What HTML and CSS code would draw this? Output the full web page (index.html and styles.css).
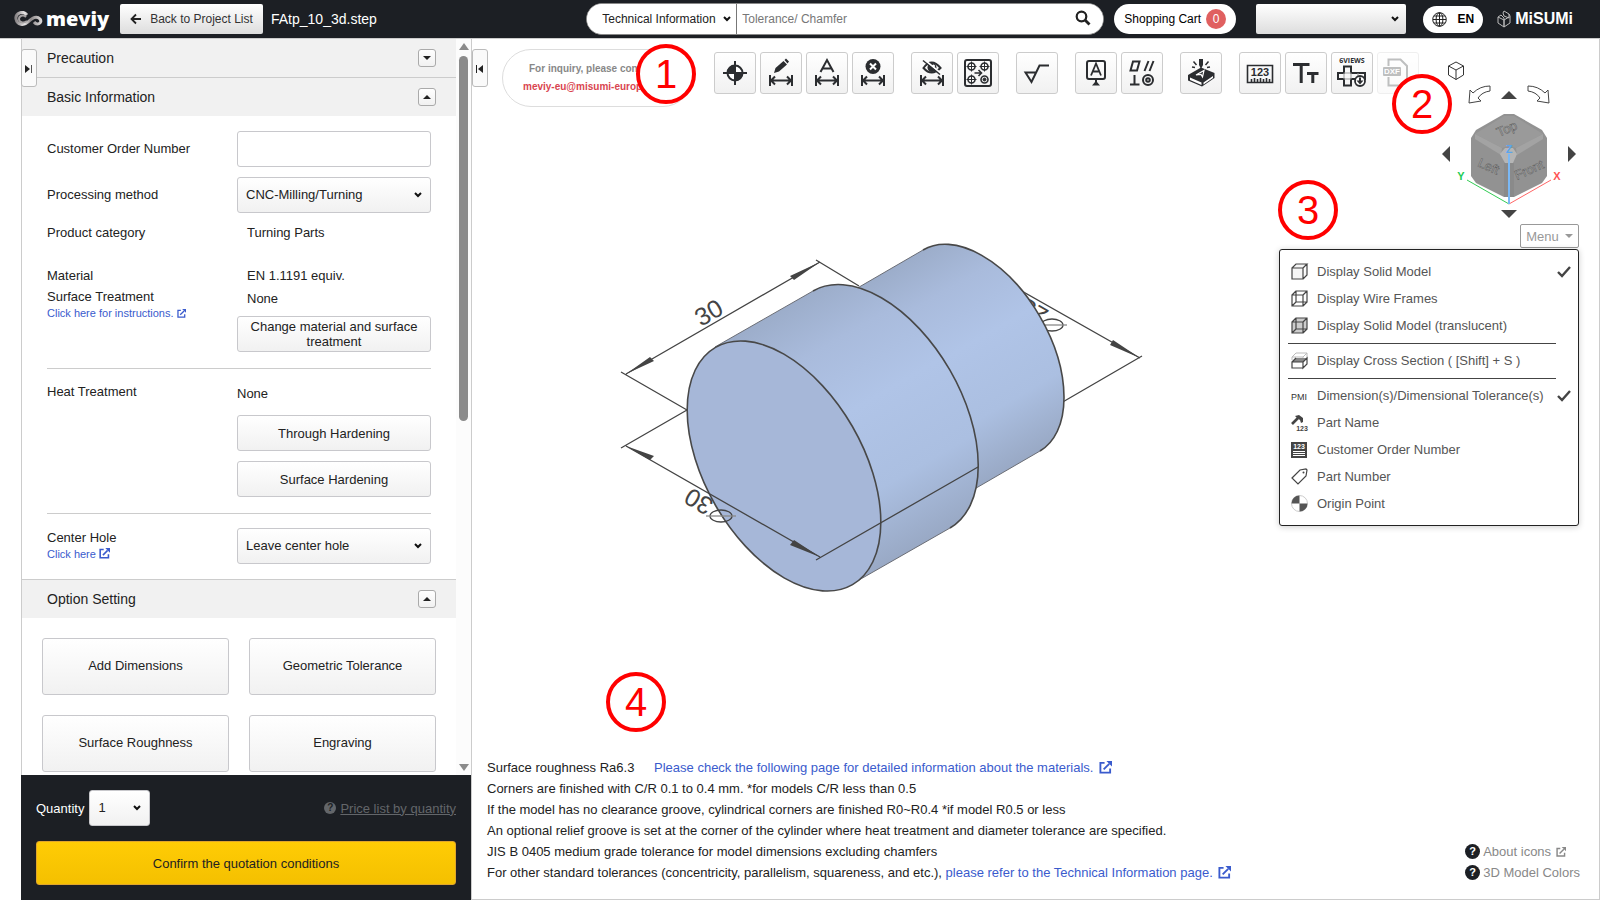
FILE: index.html
```html
<!DOCTYPE html>
<html lang="en">
<head>
    <meta charset="UTF-8">
    <meta name="viewport" content="width=device-width, initial-scale=1.0">
    <title>meviy - FAtp_10_3d.step</title>
    <link rel="stylesheet" href="styles.css">
</head>
<body>
    <!-- shared icons -->
    <svg class="defs" aria-hidden="true">
        <symbol id="ext" viewBox="0 0 14 14">
            <path d="M6 2H1.500v10.500H12V8" fill="none" stroke="currentColor" stroke-width="2"/>
            <path d="M5 9l6-6" stroke="currentColor" stroke-width="2"/>
            <path d="M8 0h6v6z" fill="currentColor"/>
        </symbol>
        <symbol id="span" viewBox="0 0 40 40">
            <path d="M9 22v11M31 22v11M10 27.500h20M14 23.500l-4 4 4 4M26 23.500l4 4-4 4" fill="none" stroke="#2b2d30" stroke-width="2"/>
        </symbol>
        <symbol id="check" viewBox="0 0 14 12">
            <path d="M1 6l4 4 8-9" fill="none" stroke="#444" stroke-width="2.400"/>
        </symbol>
    </svg>

    <header class="topbar">
        <a class="logo" href="#" aria-label="meviy">
            <svg width="30" height="16" viewBox="0 0 30 16">
                <defs>
                    <linearGradient id="ribbon" x1="0" x2="1">
                        <stop offset="0" stop-color="#8a8688"/>
                        <stop offset=".35" stop-color="#e8e6e6"/>
                        <stop offset=".6" stop-color="#8c8788"/>
                        <stop offset="1" stop-color="#d6d3d3"/>
                    </linearGradient>
                </defs>
                <path d="M13 4C9-1 1 2 2 8s8 7 12 3 8-7 12-3c3 4-3 7-6 3" fill="none" stroke="url(#ribbon)" stroke-width="3"/>
                <path d="M12 6C9 3 5 5 5 8s4 5 8 2" fill="none" stroke="#a5a1a2" stroke-width="2"/>
            </svg>
            <span>meviy</span>
        </a>
        <button class="back">
            <svg width="12" height="12" viewBox="0 0 12 12"><path d="M11 6H2M6 1.500L1.500 6 6 10.500" fill="none" stroke="#222" stroke-width="1.800"/></svg>
            Back to Project List
        </button>
        <span class="filename">FAtp_10_3d.step</span>
        <form class="search">
            <select aria-label="Search category"><option>Technical Information</option></select>
            <input type="text" placeholder="Tolerance/ Chamfer" aria-label="Search">
            <button type="button" aria-label="Search">
                <svg width="16" height="16" viewBox="0 0 16 16"><circle cx="6.500" cy="6.500" r="4.800" fill="none" stroke="#222" stroke-width="2.200"/><path d="M10 10l4.500 4.500" stroke="#222" stroke-width="2.800"/></svg>
            </button>
        </form>
        <button class="cart">Shopping Cart <span class="count">0</span></button>
        <select class="account" aria-label="Account"><option></option></select>
        <button class="lang">
            <svg width="15" height="15" viewBox="0 0 15 15" fill="none" stroke="#222">
                <circle cx="7.500" cy="7.500" r="6.800"/><ellipse cx="7.500" cy="7.500" rx="3.400" ry="6.800"/><path d="M7.500 1v13M1 7.500h13M2 4h11M2 11h11"/>
            </svg>
            EN
        </button>
        <a class="misumi" href="#" aria-label="MiSUMi">
            <svg width="14" height="18" viewBox="0 0 14 18" fill="none" stroke="#bbb">
                <path d="M7 1l5 3v4L7 6 6 3zM12 4l1 2v7l-6 4-6-4V7l3-2 3 3v9M1 7l6 3 5-3M7 10v7"/>
            </svg>
            <span>MiSUMi</span>
        </a>
    </header>

    <div class="page">
        <aside class="sidebar">
            <div class="panel">
                <div class="panel-body">
                    <section>
                        <h2 class="head">Precaution <button class="toggle" aria-label="Open precaution"><i class="down"></i></button></h2>
                    </section>
                    <section>
                        <h2 class="head">Basic Information <button class="toggle" aria-label="Close basic information"><i class="up"></i></button></h2>
                        <div class="basic">
                            <div class="row">
                                <label for="orderNumber">Customer Order Number</label>
                                <input type="text" id="orderNumber">
                            </div>
                            <div class="row">
                                <label for="method">Processing method</label>
                                <select id="method"><option>CNC-Milling/Turning</option></select>
                            </div>
                            <div class="row">
                                <span class="name">Product category</span>
                                <span class="value">Turning Parts</span>
                            </div>
                            <div class="row material">
                                <div class="name">
                                    <p>Material</p>
                                    <p>Surface Treatment</p>
                                    <a href="#">Click here for instructions. <svg width="9" height="9"><use href="#ext"/></svg></a>
                                </div>
                                <div class="field">
                                    <p class="value">EN 1.1191 equiv.</p>
                                    <p class="value surface">None</p>
                                    <button class="btn">Change material and surface treatment</button>
                                </div>
                            </div>
                            <hr>
                            <div class="row heat">
                                <p class="name">Heat Treatment</p>
                                <div class="field">
                                    <p>None</p>
                                    <button class="btn">Through Hardening</button>
                                    <button class="btn">Surface Hardening</button>
                                </div>
                            </div>
                            <hr>
                            <div class="row hole">
                                <div class="name">
                                    <label for="hole">Center Hole</label>
                                    <a href="#">Click here <svg width="11" height="11"><use href="#ext"/></svg></a>
                                </div>
                                <select id="hole"><option>Leave center hole</option></select>
                            </div>
                        </div>
                    </section>
                    <section>
                        <h2 class="head">Option Setting <button class="toggle" aria-label="Close option setting"><i class="up"></i></button></h2>
                        <div class="options">
                            <button class="btn">Add Dimensions</button>
                            <button class="btn">Geometric Tolerance</button>
                            <button class="btn">Surface Roughness</button>
                            <button class="btn">Engraving</button>
                        </div>
                    </section>
                </div>
                <div class="scrollbar">
                    <i class="up"></i>
                    <div class="track"><div class="thumb"></div></div>
                    <i class="down"></i>
                </div>
                <button class="tab" aria-label="Expand panel"><svg width="8" height="8"><path d="M0 0l5 4-5 4z" fill="#222"/><path d="M6.500 0v8" stroke="#555"/></svg></button>
            </div>
            <div class="order">
                <div class="order-row">
                    <label for="quantity">Quantity</label>
                    <select id="quantity"><option>1</option></select>
                    <a href="#"><span class="help">?</span><u>Price list by quantity</u></a>
                </div>
                <button class="confirm">Confirm the quotation conditions</button>
            </div>
        </aside>

        <main class="viewer">
            <button class="tab" aria-label="Collapse panel"><svg width="8" height="8"><path d="M7 0L2 4l5 4z" fill="#222"/><path d="M.5 0v8" stroke="#222"/></svg></button>
            <div class="toolbar">
                <div class="inquiry">
                    <p>For inquiry, please con</p>
                    <a href="#">meviy-eu@misumi-europ</a>
                </div>
                <div class="group">
                    <button aria-label="Origin"><svg viewBox="0 0 40 40"><circle cx="20" cy="20" r="7.500" fill="#fff" stroke="#2b2d30" stroke-width="2"/><path d="M20 20v-8a8 8 0 0 0-8 8zM20 20v8a8 8 0 0 0 8-8z" fill="#2b2d30"/><path d="M8 20h24M20 8v24" stroke="#2b2d30" stroke-width="2"/></svg></button>
                    <button aria-label="Edit dimension"><svg viewBox="0 0 40 40"><path d="M13 20l1.500-5 8-7 3.500 3.500-8 7zM23.500 7l1.500-1.500 3 3-1.500 2z" fill="#2b2d30"/><use href="#span"/></svg></button>
                    <button aria-label="Text dimension"><svg viewBox="0 0 40 40"><path d="M13.500 19L20 7l6.500 12M16 15.500h8" fill="none" stroke="#2b2d30" stroke-width="2"/><use href="#span"/></svg></button>
                    <button aria-label="Delete dimension"><svg viewBox="0 0 40 40"><circle cx="20" cy="13.500" r="7.500" fill="#2b2d30"/><path d="M17 10.500l6 6M23 10.500l-6 6" stroke="#fff" stroke-width="2"/><use href="#span"/></svg></button>
                </div>
                <div class="group">
                    <button aria-label="Hide dimension"><svg viewBox="0 0 40 40"><path d="M11.500 15q8-11 17 0-9 9-17 0z" fill="none" stroke="#2b2d30" stroke-width="2"/><circle cx="20" cy="14.500" r="4.500" fill="#2b2d30"/><circle cx="21.500" cy="13" r="1.500" fill="#fff"/><path d="M12 6.500l17 14" stroke="#fff" stroke-width="2"/><path d="M11 7.500l17 14" stroke="#2b2d30" stroke-width="1.500"/><use href="#span"/></svg></button>
                    <button aria-label="Hole pattern"><svg viewBox="0 0 40 40" fill="none" stroke="#2b2d30"><rect x="7" y="7" width="26" height="26" rx="2" stroke-width="2"/><g stroke-width="1.600"><circle cx="13.500" cy="13.500" r="3.500"/><circle cx="26.500" cy="13.500" r="3.500"/><circle cx="13.500" cy="26.500" r="3.500"/><circle cx="26.500" cy="26.500" r="3.500"/></g><path d="M8.500 13.500h10M13.500 8.500v10M21.500 13.500h10M26.500 8.500v10M8.500 26.500h10M13.500 21.500v10" stroke-width="1"/><circle cx="26.500" cy="26.500" r="1.500" fill="#2b2d30"/><path d="M16.500 20h7M20.500 17l3 3-3 3" stroke-width="1.600"/></svg></button>
                </div>
                <div class="group">
                    <button aria-label="Surface roughness"><svg viewBox="0 0 40 40"><path d="M18.500 19.500H8.500l6 9.500 8-16.500H32" fill="none" stroke="#2b2d30" stroke-width="2"/></svg></button>
                </div>
                <div class="group">
                    <button aria-label="Datum"><svg viewBox="0 0 40 40"><rect x="11" y="8" width="18" height="18" rx="2" fill="none" stroke="#2b2d30" stroke-width="2"/><path d="M15 22.500l5-12 5 12M17 18.500h6" fill="none" stroke="#2b2d30" stroke-width="1.800"/><path d="M19 26h2v3l3 3.500h-8l3-3.500z" fill="#2b2d30"/></svg></button>
                    <button aria-label="Geometric tolerance"><svg viewBox="0 0 40 40" fill="none" stroke="#2b2d30" stroke-width="2"><path d="M8.500 17.500l2.500-9h6.500l-2.500 9zM22.500 18l4-10M27.500 18l4-10M12.500 22v9M8 31.500h9.500"/><circle cx="26" cy="27" r="5"/><circle cx="26" cy="27" r="1.800"/></svg></button>
                </div>
                <div class="group">
                    <button aria-label="Engraving"><svg viewBox="0 0 40 40"><path d="M7 22l13-7.500L33.500 20v5L21 33.500 7 27.500z" fill="#2b2d30"/><path d="M9 24.500l11.500 5V32L9 27zM22.500 29.500l9.500-6.500v2l-9.500 6.500z" fill="#fff"/><path d="M15 22l8-4.500-1.500 6.500-1.500-2.500z" fill="none" stroke="#fff" stroke-width="1.200"/><path d="M18 6h4v6l-2 4-2-4z" fill="#2b2d30"/><path d="M12.500 8.500l3 3.500M27.500 8.500l-3 3.500M11 14l3 .5M29 14l-3 .5" stroke="#2b2d30" stroke-width="1.500"/></svg></button>
                </div>
                <div class="group">
                    <button aria-label="Measure"><svg viewBox="0 0 40 40"><path d="M7.500 12.500h25v17h-25zM11.500 29v-3M14.500 29v-4M17.500 29v-3M20.500 29v-4M23.500 29v-3M26.500 29v-4M29.500 29v-3" fill="none" stroke="#2b2d30" stroke-width="1.600"/><text x="20" y="23" class="ruler">123</text></svg></button>
                    <button aria-label="Text size"><svg viewBox="0 0 40 40"><path d="M7 11.500h16.500M15.200 11v19M21 20.500h11.500M26.800 20v10" stroke="#2b2d30" stroke-width="3" fill="none"/></svg></button>
                    <button aria-label="Six views"><svg viewBox="0 0 40 40"><text x="20" y="10" class="views">6VIEWS</text><path d="M12 13.500h7v6.500h14v6H19v6.500h-7V26H6v-6h6z" fill="none" stroke="#2b2d30" stroke-width="2"/><path d="M12 20h7v6h-7zM26 20v6" fill="none" stroke="#999"/><circle cx="28" cy="28" r="5" fill="#fff" stroke="#2b2d30" stroke-width="1.800"/><path d="M27 24.500h2v3h2.500L28 31.500l-3.500-4H27z" fill="#2b2d30"/></svg></button>
                    <button aria-label="DXF" disabled><svg viewBox="0 0 40 40"><path d="M10.500 13V6.500h12l6.500 6.500v19.500H10.500V24" fill="none" stroke="#2b2d30" stroke-width="2"/><rect x="5" y="14" width="18" height="9" rx="1" fill="#2b2d30"/><text x="14" y="21" class="dxf">DXF</text></svg></button>
                </div>
            </div>

            <div class="stage">
                <svg class="model" width="536" height="362" viewBox="612 238 536 362">
                    <defs>
                        <linearGradient id="body" gradientUnits="userSpaceOnUse" x1="716" y1="347" x2="853" y2="584">
                            <stop offset="0" stop-color="#9cadca"/>
                            <stop offset=".2" stop-color="#a9bbdc"/>
                            <stop offset=".45" stop-color="#b0c4e7"/>
                            <stop offset=".75" stop-color="#abbfe1"/>
                            <stop offset="1" stop-color="#99a9c5"/>
                        </linearGradient>
                        <linearGradient id="shaft" gradientUnits="userSpaceOnUse" x1="924" y1="250" x2="1041" y2="451">
                            <stop offset="0" stop-color="#9cadca"/>
                            <stop offset=".2" stop-color="#a9bbdc"/>
                            <stop offset=".45" stop-color="#b0c4e7"/>
                            <stop offset=".75" stop-color="#abbfe1"/>
                            <stop offset="1" stop-color="#99a9c5"/>
                        </linearGradient>
                    </defs>
                    <!-- shaft diameter, partly behind the part -->
                    <g class="dim">
                        <path d="M1014 286L1141 358M1143 356L1062 403"/>
                        <path class="arrow" d="M1141 358l-30-13 3-5z"/>
                        <text transform="translate(1051 311) rotate(210)">25</text>
                        <ellipse cx="1053" cy="325" rx="11" ry="6"/>
                        <path class="thin" d="M1038 325h30"/>
                    </g>
                    <path d="M824 308L924 250A110 64 60 0 1 1041 451L941 509z" fill="url(#shaft)"/>
                    <path class="side" d="M824 308L924 250M1041 451L941 509"/>
                    <path class="edge" d="M924 250A110 64 60 0 1 1041 451"/>
                    <path d="M716 347L814 291A130 75 60 0 1 951 528L853 584z" fill="url(#body)"/>
                    <path class="side" d="M716 347L814 291M951 528L853 584"/>
                    <path class="edge" d="M814 291A130 75 60 0 1 951 528"/>
                    <ellipse class="edge" cx="785" cy="466" rx="137" ry="79" transform="rotate(60 785 466)" fill="#a6b7d8"/>
                    <g class="dim">
                        <path d="M627 374L821 262M622 372L688 410M817 260L860 286"/>
                        <path class="arrow" d="M627 374l24-17 4 4zM821 262l-30 14 4 4z"/>
                        <text transform="translate(702 327) rotate(-30)">30</text>
                        <path d="M627 446L821 557M622 448L688 410M817 560L979 467"/>
                        <path class="arrow" d="M627 446l24 14 4-4zM821 557l-30-12 4-5z"/>
                        <text transform="translate(716 501) rotate(210)">30</text>
                        <ellipse cx="722" cy="516" rx="11" ry="6"/>
                        <path class="thin" d="M707 516h30"/>
                    </g>
                </svg>
            </div>

            <div class="notes">
                <div>
                    <p>Surface roughness Ra6.3 <a class="check-link" href="#">Please check the following page for detailed information about the materials. <svg width="13" height="13"><use href="#ext"/></svg></a></p>
                    <p>Corners are finished with C/R 0.1 to 0.4 mm. *for models C/R less than 0.5</p>
                    <p>If the model has no clearance groove, cylindrical corners are finished R0~R0.4 *if model R0.5 or less</p>
                    <p>An optional relief groove is set at the corner of the cylinder where heat treatment and diameter tolerance are specified.</p>
                    <p>JIS B 0405 medium grade tolerance for model dimensions excluding chamfers</p>
                    <p>For other standard tolerances (concentricity, parallelism, squareness, and etc.), <a href="#">please refer to the Technical Information page. <svg width="13" height="13"><use href="#ext"/></svg></a></p>
                </div>
                <div class="guides">
                    <a href="#"><span class="help">?</span>About icons <svg width="10" height="10"><use href="#ext"/></svg></a>
                    <a href="#"><span class="help">?</span>3D Model Colors</a>
                </div>
            </div>

            <div class="view-tools">
                <div class="navcube">
                    <button class="home" aria-label="Isometric view"><svg width="18" height="20" viewBox="0 0 18 20" fill="none" stroke="#333"><path d="M9 1l7.500 4v9L9 18.500 1.500 14V5zM1.500 5L9 9l7.500-4M9 9v9.500"/></svg></button>
                    <div class="turn">
                        <button aria-label="Rotate left"><svg width="23" height="19" viewBox="0 0 23 19"><path d="M22 1v5Q14 7 10 13l3 3-12 2L2 5l3 3Q12 1 22 1z" fill="#fff" stroke="#444"/></svg></button>
                        <button aria-label="Up"><i class="up"></i></button>
                        <button aria-label="Rotate right"><svg width="23" height="19" viewBox="0 0 23 19"><path d="M1 1v5q8 1 12 7l-3 3 12 2-1-13-3 3Q11 1 1 1z" fill="#fff" stroke="#444"/></svg></button>
                    </div>
                    <div class="cube-row">
                        <button aria-label="Left"><i class="left"></i></button>
                        <svg width="108" height="92" viewBox="1455 114 108 92">
                            <path d="M1504 114h10l28 16 5 8v38l-5 7-28 14h-10l-28-14-5-7v-38l5-8z" fill="#929292"/>
                            <path d="M1475 134l29-18h10l29 18-27 14-7-2-7 2z" fill="#9a9a9a"/>
                            <path d="M1475 134l27 14-1 7-26-16zM1543 134l-27 14 1 7 26-16z" fill="#a3a3a3"/>
                            <path d="M1504 163h10v34h-10z" fill="#8a8a8a"/>
                            <path d="M1505 148h8l4 6-4 9h-8l-5-9z" fill="#b5b5b5"/>
                            <text class="face" transform="translate(1499 137) rotate(-24)">Top</text>
                            <text class="face" transform="translate(1477 166) rotate(24)">Left</text>
                            <text class="face" transform="translate(1517 180) rotate(-24)">Front</text>
                            <path d="M1509 204l-42-24" stroke="#3c5"/>
                            <path d="M1509 204l42-24" stroke="#f66"/>
                            <path d="M1509 204v-50" stroke="#7ab8f5" stroke-width="2"/>
                            <text class="axis" x="1509" y="153" fill="#5aa5ee">Z</text>
                            <text class="axis" x="1461" y="180" fill="#2c5">Y</text>
                            <text class="axis" x="1557" y="180" fill="#f55">X</text>
                        </svg>
                        <button aria-label="Right"><i class="right"></i></button>
                    </div>
                    <button class="below" aria-label="Down"><i class="down"></i></button>
                </div>
                <button class="menu-button">Menu <i class="down"></i></button>
                <ul class="menu">
                    <li><a href="#"><svg viewBox="0 0 17 17"><path d="M1 5h11v11H1zM1 5l4-4h11l-4 4M16 1v11l-4 4" fill="#f6f6f6" stroke="#444" stroke-width="1.200"/></svg>Display Solid Model</a><svg class="tick"><use href="#check"/></svg></li>
                    <li><a href="#"><svg viewBox="0 0 17 17"><path d="M1 5h11v11H1zM5 1h11v11H5zM1 5l4-4M12 5l4-4M12 16l4-4M1 16l4-4" fill="none" stroke="#444" stroke-width="1.200"/></svg>Display Wire Frames</a></li>
                    <li><a href="#"><svg viewBox="0 0 17 17"><path d="M1 5l4-4h11v11l-4 4H1z" fill="#ccc"/><path d="M1 5h11v11H1zM5 1h11v11H5zM1 5l4-4M12 5l4-4M12 16l4-4M1 16l4-4" fill="none" stroke="#444" stroke-width="1.200"/></svg>Display Solid Model (translucent)</a></li>
                    <li class="divider"></li>
                    <li><a href="#"><svg viewBox="0 0 17 17"><path d="M1 8V5l4-4h11v6M1 5h11l4-4M12 5v3" fill="none" stroke="#bbb"/><path d="M1 10l4-4h11l-4 4z" fill="#888"/><path d="M1 10h11v6H1zM16 6v6l-4 4v-6zM1 10l4-4" fill="none" stroke="#444" stroke-width="1.200"/></svg>Display Cross Section ( [Shift] + S )</a></li>
                    <li class="divider"></li>
                    <li><a href="#"><svg viewBox="0 0 17 17"><text x="8" y="13" class="pmi">PMI</text></svg>Dimension(s)/Dimensional Tolerance(s)</a><svg class="tick"><use href="#check"/></svg></li>
                    <li><a href="#"><svg viewBox="0 0 17 17"><path d="M1 10l6-6" stroke="#444" stroke-width="2.600"/><path d="M4 2l4-1 4 3v4l-2 1-1-3-3-2z" fill="#444"/><text x="11" y="17" class="nums">123</text></svg>Part Name</a></li>
                    <li><a href="#"><svg viewBox="0 0 17 17"><path d="M0 1h16v16H0z" fill="#444"/><path d="M2 10.500h12M2 12.500h12M2 14.500h12" stroke="#fff"/><text x="8" y="8" class="nums white">123</text></svg>Customer Order Number</a></li>
                    <li><a href="#"><svg viewBox="0 0 17 17"><path d="M1 10l8-8 6-1 1 1-1 6-8 8z" fill="none" stroke="#444" stroke-width="1.200"/><circle cx="12.500" cy="4.500" r="1" fill="#444"/></svg>Part Number</a></li>
                    <li><a href="#"><svg viewBox="0 0 17 17"><circle cx="8.500" cy="8.500" r="8" fill="#fff" stroke="#ccc"/><path d="M8.500 8.500v-8a8 8 0 0 0-8 8zM8.500 8.500v8a8 8 0 0 0 8-8z" fill="#555"/></svg>Origin Point</a></li>
                </ul>
            </div>

            <!-- callouts laid over the canvas -->
            <span class="callout one">1</span>
            <span class="callout two">2</span>
            <span class="callout three">3</span>
            <span class="callout four">4</span>
        </main>
    </div>
</body>
</html>
```

FILE: styles.css
```css
* {
    box-sizing: border-box;
}
body {
    margin: 0;
    height: 100vh;
    display: flex;
    flex-direction: column;
    font-family: "Liberation Sans", Arial, sans-serif;
    font-size: 13px;
    color: #222;
    background: #fff;
}
p, h2, ul {
    margin: 0;
    padding: 0;
}
button, input, select {
    font: inherit;
    color: inherit;
}
button {
    padding: 0;
    cursor: pointer;
}
select {
    appearance: none;
    --arrow: url("data:image/svg+xml,%3Csvg xmlns='http://www.w3.org/2000/svg' width='8' height='6'%3E%3Cpath d='M1 1l3 3 3-3' fill='none' stroke='%23111' stroke-width='2'/%3E%3C/svg%3E") no-repeat;
}
a {
    color: #3a5bcd;
    text-decoration: none;
}
.defs {
    position: absolute;
    width: 0;
    height: 0;
}

/* small triangles */
i {
    display: block;
    width: 0;
    height: 0;
    border: 4px solid transparent;
}
i.up {
    border-top: 0;
    border-bottom-color: #222;
}
i.down {
    border-bottom: 0;
    border-top-color: #222;
}

/* header */
.topbar {
    display: flex;
    align-items: center;
    flex: none;
    height: 39px;
    padding: 0 27px 0 14px;
    background: #1c1f24;
    border-bottom: 1px solid #ccc;
    color: #fff;
    font-size: 12px;
}
.logo {
    display: flex;
    align-items: center;
    width: 106px;
    gap: 2px;
    color: #fff;
    font: 800 20px/24px "Open Sans", sans-serif;
}
.back {
    display: flex;
    align-items: center;
    justify-content: center;
    gap: 8px;
    width: 143px;
    height: 30px;
    border: 0;
    border-radius: 2px;
    background: linear-gradient(#fff, #ddd);
    color: #333;
}
.filename {
    flex: 1;
    margin-left: 8px;
    font-size: 14px;
}
.search {
    display: flex;
    width: 518px;
    height: 32px;
    border: 1px solid #888;
    border-radius: 16px;
    background: #fff;
    overflow: hidden;
    color: #222;
}
.search select {
    width: 150px;
    padding: 0 15px;
    border: 0;
    border-right: 1px solid #777;
    background: var(--arrow) right 5px center, #fff;
}
.search input {
    flex: 1;
    min-width: 0;
    padding: 0 5px;
    border: 0;
}
.search input::placeholder {
    color: #777;
}
.search button {
    width: 40px;
    border: 0;
    background: #fff;
}
.cart {
    display: flex;
    align-items: center;
    justify-content: center;
    gap: 5px;
    width: 122px;
    height: 30px;
    margin-left: 10px;
    border: 0;
    border-radius: 15px;
    background: #fff;
    color: #000;
}
.count {
    width: 20px;
    line-height: 20px;
    border-radius: 10px;
    background: #e06060;
    color: #fff;
}
.account {
    width: 150px;
    height: 30px;
    margin-left: 20px;
    border: 0;
    border-radius: 2px;
    background: var(--arrow) right 7px center, linear-gradient(#fff, #ddd);
    color: #000;
}
.lang {
    display: flex;
    align-items: center;
    justify-content: center;
    gap: 10px;
    width: 60px;
    height: 27px;
    margin-left: 17px;
    border: 0;
    border-radius: 14px;
    background: #fff;
    color: #000;
    font-weight: bold;
}
.misumi {
    display: flex;
    align-items: center;
    gap: 4px;
    margin-left: 14px;
    color: #fff;
    font: bold 16px/20px "Liberation Sans", sans-serif;
}

.page {
    flex: 1;
    min-height: 0;
    display: flex;
    padding-left: 21px;
}

/* sidebar */
.sidebar {
    display: flex;
    flex-direction: column;
    width: 450px;
    flex: none;
}
.panel {
    position: relative;
    flex: 1;
    min-height: 0;
    display: flex;
    border-left: 1px solid #ccc;
}
.panel-body {
    flex: 1;
    overflow: hidden;
}
.head {
    display: flex;
    align-items: center;
    justify-content: space-between;
    height: 38px;
    padding: 0 20px 0 25px;
    background: #f1f1f1;
    font-size: 14px;
    font-weight: normal;
}
section + section .head {
    height: 39px;
    border-top: 1px solid #ccc;
}
.toggle {
    display: flex;
    align-items: center;
    justify-content: center;
    width: 18px;
    height: 18px;
    border: 1px solid #aaa;
    border-radius: 3px;
    background: linear-gradient(#fff, #f1f1f1);
}
.basic {
    display: flex;
    flex-direction: column;
    gap: 10px;
    padding: 15px 25px;
}
.row {
    display: flex;
    align-items: center;
}
.row > label, .name {
    width: 190px;
}
.row > input, .row > select, .field {
    flex: 1;
    min-width: 0;
}
.row > input, .row > select {
    height: 36px;
    border: 1px solid #c8c8cc;
    border-radius: 3px;
}
.row > select, .order select {
    padding: 0 8px 2px;
    background: var(--arrow) right 8px center, linear-gradient(#fff, #f1f1f1);
}
.row > label {
    padding-bottom: 2px;
}
.row > .value {
    line-height: 19px;
}
.value {
    padding-left: 10px;
}
.btn {
    width: 100%;
    height: 36px;
    border: 1px solid #c8c8cc;
    border-radius: 3px;
    background: linear-gradient(#fff, #f1f1f1);
    line-height: 15px;
}
.basic hr {
    width: 100%;
    height: 1px;
    margin: 6px 0 4px;
    border: 0;
    background: #ccc;
}
.row a {
    display: block;
    font-size: 11px;
    line-height: 12px;
}
.row a svg {
    vertical-align: -1px;
}
.material, .heat, .hole {
    align-items: flex-start;
}
.material {
    margin-top: 13px;
}
.material p {
    line-height: 21px;
}
.material .surface {
    line-height: 25px;
}
.material .field .btn {
    margin-top: 5px;
}
.heat {
    line-height: 18px;
}
.heat .field {
    display: flex;
    flex-direction: column;
    gap: 10px;
}
.heat .field p {
    line-height: 22px;
}
.hole label {
    display: block;
    line-height: 20px;
}
.options {
    display: grid;
    grid-template-columns: 1fr 1fr;
    gap: 20px;
    padding: 20px;
}
.options .btn {
    height: 57px;
    padding-bottom: 2px;
}
.scrollbar {
    display: flex;
    flex-direction: column;
    align-items: center;
    width: 15px;
    padding: 4px 0;
    background: #fcfcfc;
}
.scrollbar i {
    border-width: 5px;
    border-top-width: 7px;
    border-bottom-width: 7px;
}
.scrollbar i.up {
    border-top-width: 0;
    border-bottom-color: #8b8b8b;
}
.scrollbar i.down {
    border-bottom-width: 0;
    border-top-color: #8b8b8b;
}
.track {
    flex: 1;
    padding: 6px 0;
}
.thumb {
    width: 9px;
    height: 52%;
    border-radius: 5px;
    background: #8b8b8b;
}
.tab {
    position: absolute;
    top: 10px;
    left: 0;
    width: 16px;
    height: 38px;
    border: 1px solid #bbb;
    border-radius: 3px;
    background: #fafafa;
}
.panel .tab {
    left: -1px;
}
.order {
    padding: 15px;
    background: #1c1f24;
    color: #fff;
}
.order-row {
    display: flex;
    align-items: center;
}
.order select {
    width: 61px;
    height: 36px;
    margin: 0 auto 0 5px;
    border: 1px solid #c8c8cc;
    border-radius: 3px;
    color: #222;
}
.order a {
    display: flex;
    align-items: center;
    gap: 4px;
    color: #63666a;
}
.help {
    width: 12px;
    line-height: 12px;
    border-radius: 50%;
    background: #63666a;
    color: #1c1f24;
    font-size: 10px;
    font-weight: bold;
    text-align: center;
}
.confirm {
    width: 100%;
    height: 44px;
    margin-top: 15px;
    border: 1px solid #e0a52c;
    border-radius: 3px;
    background: linear-gradient(#ffcc05, #f4c000);
}
.confirm, .btn {
    color: #222;
}

/* 3d viewer */
.viewer {
    position: relative;
    flex: 1;
    min-width: 0;
    display: flex;
    flex-direction: column;
    border: 1px solid #ccc;
    border-top: 0;
}
.toolbar {
    display: flex;
    align-items: flex-start;
    gap: 17px;
    padding: 10px 0 0 30px;
}
.inquiry {
    width: 190px;
    height: 58px;
    margin-right: 5px;
    padding: 10px 0 0 20px;
    border: 1px solid #ddd;
    border-radius: 29px;
    font-size: 10px;
    font-weight: bold;
    line-height: 18px;
    color: #888;
    white-space: nowrap;
}
.inquiry p {
    padding-left: 6px;
}
.inquiry a {
    color: #d9454f;
}
.group {
    display: flex;
    gap: 4px;
    padding-top: 3px;
}
.group button {
    width: 42px;
    height: 42px;
    border: 1px solid #ccc;
    border-radius: 3px;
    background: linear-gradient(#fff, #f1f1f1);
}
.group button:disabled {
    opacity: .3;
}
.group svg {
    display: block;
    width: 40px;
    height: 40px;
}
.group text {
    font: bold 10px "Liberation Sans", sans-serif;
    text-anchor: middle;
    fill: #2b2d30;
}
.group .ruler {
    font-size: 11px;
}
.group .views {
    font: bold 7px "Open Sans", sans-serif;
}
.group .dxf {
    font-size: 8px;
    fill: #fff;
}
.stage {
    flex: 1;
    min-height: 0;
    display: flex;
    align-items: flex-start;
    padding: 131px 0 0 139px;
}
.edge {
    stroke: #484848;
    stroke-width: 1.600;
}
path.edge, .side {
    fill: none;
}
.side {
    stroke: #6a6d75;
}
.dim {
    fill: none;
    stroke: #444;
    stroke-width: 1.300;
}
.dim .arrow {
    fill: #444;
    stroke: none;
}
.dim .thin {
    stroke: #888;
}
.dim text {
    font-size: 25px;
    fill: #444;
    stroke: none;
}
.notes {
    display: flex;
    justify-content: space-between;
    align-items: flex-end;
    padding: 0 19px 16px 15px;
    line-height: 21px;
}
.check-link {
    margin-left: 16px;
}
.notes svg {
    margin-left: 2px;
    vertical-align: -2px;
}
.guides a {
    display: flex;
    align-items: center;
    gap: 3px;
    color: #888;
}
.guides .help {
    width: 15px;
    line-height: 15px;
    background: #1c1f24;
    color: #fff;
    font-size: 11px;
}

/* view cube and display menu */
.view-tools {
    position: absolute;
    top: 22px;
    right: 20px;
    width: 300px;
    display: flex;
    flex-direction: column;
    align-items: flex-end;
}
.navcube {
    display: flex;
    flex-direction: column;
    width: 134px;
    margin-right: 3px;
}
.navcube button {
    display: flex;
    border: 0;
    background: none;
}
.home {
    margin-left: 5px;
}
.turn {
    display: flex;
    align-items: center;
    justify-content: center;
    gap: 10px;
    margin-top: 4px;
}
.navcube i {
    border-width: 8px;
}
.navcube i.up {
    border-top-width: 0;
    border-bottom-color: #444;
}
.navcube i.down {
    border-bottom-width: 0;
    border-top-color: #444;
}
.navcube i.left {
    border-left-width: 0;
    border-right-color: #444;
}
.navcube i.right {
    border-right-width: 0;
    border-left-color: #444;
}
.cube-row {
    display: flex;
    justify-content: space-between;
    margin-top: 10px;
}
.cube-row button {
    align-self: flex-start;
    margin-top: 32px;
}
.below {
    align-self: center;
    margin-top: 4px;
}
.face {
    font-size: 13px;
    fill: #b0b0b0;
    stroke: #5c5c5c;
    stroke-width: .5;
}
.axis {
    font-size: 11px;
    font-weight: bold;
    text-anchor: middle;
}
.menu-button {
    display: flex;
    align-items: center;
    justify-content: center;
    gap: 6px;
    width: 59px;
    height: 24px;
    margin-top: 6px;
    border: 1px solid #999;
    border-radius: 2px;
    background: #fff;
    color: #999;
}
.menu-button i.down {
    border-top-color: #999;
}
.menu {
    width: 100%;
    margin-top: 1px;
    padding: 8px;
    border: 1px solid #222;
    border-radius: 3px;
    background: #fff;
    box-shadow: 0 1px 6px rgba(0, 0, 0, 0.2);
    list-style: none;
}
.menu li {
    display: flex;
    align-items: center;
    justify-content: space-between;
    height: 27px;
}
.menu .divider {
    height: 8px;
    margin-right: 14px;
    background: linear-gradient(#444, #444) center / 100% 1px no-repeat;
}
.menu a {
    display: flex;
    align-items: center;
    gap: 9px;
    padding-left: 3px;
    color: #555;
}
.menu a svg {
    width: 17px;
    height: 17px;
    overflow: visible;
}
.menu .tick {
    width: 14px;
    height: 12px;
    margin-right: -1px;
}
.pmi {
    font-size: 9px;
    text-anchor: middle;
    fill: #333;
}
.nums {
    font-size: 7px;
    font-weight: bold;
    text-anchor: middle;
    fill: #444;
}
.nums.white {
    fill: #fff;
}

/* numbered callouts */
.callout {
    position: absolute;
    width: 60px;
    height: 60px;
    border: 4px solid #f00;
    border-radius: 50%;
    background: #fff;
    color: #f00;
    font-size: 40px;
    line-height: 52px;
    text-align: center;
}
.one {
    top: 5px;
    left: 164px;
}
.two {
    top: 35px;
    right: 147px;
}
.three {
    top: 141px;
    right: 261px;
}
.four {
    bottom: 167px;
    left: 134px;
}
```
